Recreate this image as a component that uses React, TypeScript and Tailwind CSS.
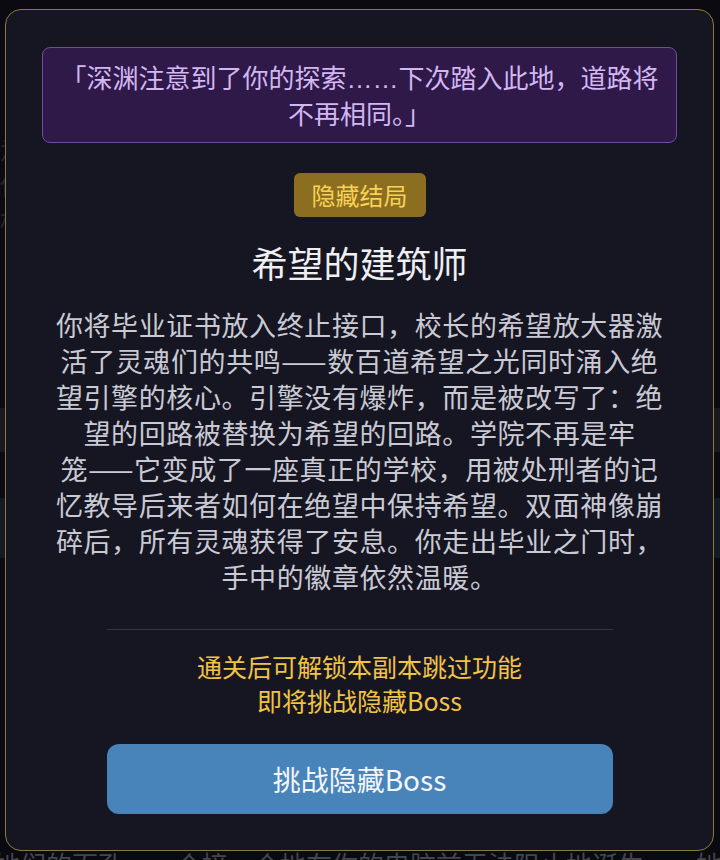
import React from 'react';

const font = { fontFamily: '"Noto Sans CJK SC", "Noto Sans", sans-serif' };

// lines are broken where the game's text box breaks them
const storyLines = [
  '你将毕业证书放入终止接口，校长的希望放大器激',
  '活了灵魂们的共鸣——数百道希望之光同时涌入绝',
  '望引擎的核心。引擎没有爆炸，而是被改写了：绝',
  '望的回路被替换为希望的回路。学院不再是牢',
  '笼——它变成了一座真正的学校，用被处刑者的记',
  '忆教导后来者如何在绝望中保持希望。双面神像崩',
  '碎后，所有灵魂获得了安息。你走出毕业之门时，',
  '手中的徽章依然温暖。',
];

const App: React.FC = () => {
  return (
    <div className="relative h-[860px] w-[720px] overflow-hidden bg-[#0a0a10]" style={font}>
      {/* faint page behind the overlay */}
      <div className="flex h-full flex-col justify-between pt-[130px] text-[26px] leading-[36px] text-[#26262e]">
        <div className="flex flex-col">
          <p className="whitespace-nowrap">走廊尽头的灯光忽明忽暗，墙上的名字一个个消失在黑暗中。</p>
          <p className="whitespace-nowrap">你听见远处传来钟声，像是在为某个被遗忘的人送行。</p>
          <p className="whitespace-nowrap">档案室的门虚掩着，里面堆满了泛黄的成绩单。</p>
          <div className="mt-[170px] h-[44px] w-full bg-[#1a1a1e]" />
          <div className="mt-[46px] h-[60px] w-full bg-[#141b24]" />
        </div>
        <p className="-mb-[22px] -ml-[6px] whitespace-nowrap text-[#45454d]">
          她们的面孔，一个接一个地在你的电脑前无法阻止地诞生……她们将是最后的面孔
        </p>
      </div>

      {/* ending modal */}
      <div className="absolute left-[5px] top-[9px] flex w-[709px] flex-col items-center rounded-[16px] border border-[#8c7a3c] bg-[#161623] px-[36px] pb-[36px] pt-[37px]">
        <div className="w-full rounded-[8px] border border-[#6e4c9e] bg-[#2e1949] px-[12px] py-[12px] text-center text-[26px] leading-[34px] text-[#d3b6f2]">
          「深渊注意到了你的探索
          <span style={{ fontFamily: '"Liberation Sans", sans-serif' }}>……</span>
          下次踏入此地，道路将
          <br />
          不再相同。」
        </div>

        <span className="mt-[30px] rounded-[6px] bg-[#8b6e1f] px-[18px] text-[24px] leading-[44px] text-[#f8d257]">
          隐藏结局
        </span>

        <h2 className="mt-[23px] text-[36px] leading-[44px] text-[#efeff2]">希望的建筑师</h2>

        <p className="mt-[23px] w-[634px] text-center text-[27px] leading-[36px] tracking-[0.6px] text-[#cacad4]">
          {storyLines.map((line, i) => (
            <span key={i} className="block whitespace-nowrap">
              {line}
            </span>
          ))}
        </p>

        <div className="mt-[34px] h-px w-[506px] bg-[#363646]" />

        <div className="mt-[19px] flex flex-col items-center text-[25px] leading-[34px] text-[#f2c344]">
          <span>通关后可解锁本副本跳过功能</span>
          <span>即将挑战隐藏Boss</span>
        </div>

        <button className="mt-[27px] h-[70px] w-[506px] rounded-[12px] bg-[#4884b9] text-[28px] text-[#f3f6fa]">
          挑战隐藏Boss
        </button>
      </div>
    </div>
  );
};

export default App;
